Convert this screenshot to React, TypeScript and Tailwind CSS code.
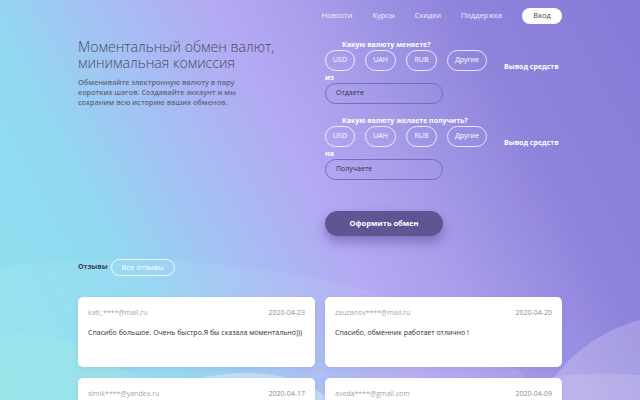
import React from "react";

const CurrencyBlock = ({ label, sub, placeholder }: { label: string; sub: string; placeholder: string }) => (
  <div className="flex flex-col">
    <div className="ml-[17px] text-[7px] font-bold text-white leading-[8px] whitespace-nowrap">{label}</div>
    <div className="flex items-start mt-[1px]">
      <div className="flex gap-[10px]">
        <div className="w-[30px] h-[21px] rounded-full border border-white/80 flex items-center justify-center text-[7px] text-white">USD</div>
        <div className="w-[31px] h-[21px] rounded-full border border-white/80 flex items-center justify-center text-[7px] text-white">UAH</div>
        <div className="w-[31px] h-[21px] rounded-full border border-white/80 flex items-center justify-center text-[7px] text-white">RUB</div>
        <div className="w-[40px] h-[21px] rounded-full border border-white/80 flex items-center justify-center text-[7px] text-white">Другие</div>
      </div>
      <div className="ml-[17px] mt-[13px] text-[7px] font-bold text-white leading-[8px] whitespace-nowrap">Вывод средств</div>
    </div>
    <div className="mt-[3px] text-[7px] font-bold text-white leading-[8px]">{sub}</div>
    <div className="mt-[1px] w-[118px] h-[21px] rounded-full border border-[#6a60b0]/80 flex items-center pl-[10px] text-[7px] text-[#33314f]">
      {placeholder}
    </div>
  </div>
);

const Card = ({ email, date, text }: { email: string; date: string; text: string }) => (
  <div className="h-[70px] bg-white rounded-[5px] px-[10px] pt-[11px] shadow-[0_2px_6px_rgba(80,80,140,0.12)]">
    <div className="flex justify-between text-[7px] leading-[9px]">
      <span className="text-[#a6a6a6]">{email}</span>
      <span className="text-[#8e8e8e]">{date}</span>
    </div>
    <div className="mt-[11px] text-[7px] leading-[9px] text-[#2e2e36]">{text}</div>
  </div>
);

export default function App() {
  return (
    <div className="relative w-[640px] h-[400px] overflow-hidden font-['Open_Sans',sans-serif] bg-[linear-gradient(62deg,#8ee2ee_0%,#90d9f1_22%,#a5c0f4_36%,#b4a9f3_50%,#a69ce9_62%,#8f84dc_78%,#857ad6_100%)]">
      <svg className="absolute inset-0 pointer-events-none" width="640" height="400" viewBox="0 0 640 400">
        <ellipse cx="120" cy="420" rx="420" ry="160" fill="white" opacity="0.07" />
        <path d="M0 335 C 40 325, 90 345, 140 380 C 160 395, 170 400, 180 400 L 0 400 Z" fill="#9fe6e6" opacity="0.5" />
        <path d="M140 400 C 200 370, 260 365, 310 385 L 330 400 Z" fill="white" opacity="0.35" />
        <path d="M540 400 C 560 360, 600 330, 640 320 L 640 400 Z" fill="white" opacity="0.2" />
        <path d="M480 400 C 520 380, 560 370, 640 375 L 640 400 Z" fill="white" opacity="0.15" />
      </svg>
      <div className="relative mx-[78px] w-[484px]">
        <div className="flex justify-end items-center pt-[8px] text-[7.5px] text-white/85">
          <span>Новости</span>
          <span className="ml-[20px]">Курсы</span>
          <span className="ml-[20px]">Скидки</span>
          <span className="ml-[20px]">Поддержка</span>
          <div className="ml-[20px] w-[40px] h-[16px] rounded-full bg-white flex items-center justify-center text-[7.5px] text-[#444]">Вход</div>
        </div>

        <div className="grid grid-cols-2 gap-[10px] mt-[15px]">
          <div>
            <h1 className="text-[14.1px] leading-[16px] font-light text-[#474a62] whitespace-nowrap">
              Моментальный обмен валют,
              <br />
              минимальная комиссия
            </h1>
            <p className="mt-[6px] w-[170px] text-[7.3px] leading-[10px] font-semibold text-[#62667d]">
              Обменивайте электронную валюту в пару коротких шагов. Создавайте аккаунт и мы сохраним всю историю ваших обменов.
            </p>
          </div>
          <div className="pt-[2px]">
            <CurrencyBlock label="Какую валюту меняете?" sub="из" placeholder="Отдаете" />
            <div className="mt-[13px]">
              <CurrencyBlock label="Какую валюту желаете получить?" sub="на" placeholder="Получаете" />
            </div>
            <div className="mt-[31px] w-[118px] h-[25px] rounded-full bg-[#5e5592] shadow-[0_6px_12px_rgba(60,40,120,0.4)] flex items-center justify-center text-[7.5px] font-bold text-white">
              Оформить обмен
            </div>
          </div>
        </div>

        <div className="flex items-center mt-[23px]">
          <span className="text-[7px] font-bold text-[#3d4158]">Отзывы</span>
          <div className="ml-[3px] w-[64px] h-[17px] rounded-full border border-white/80 flex items-center justify-center text-[7.5px] text-white">
            Все отзывы
          </div>
        </div>

        <div className="grid grid-cols-2 gap-x-[10px] gap-y-[11px] mt-[21px]">
          <Card email="kati_****@mail.ru" date="2020-04-23" text="Спасибо большое. Очень быстро.Я бы сказала моментально)))" />
          <Card email="zauzanov****@mail.ru" date="2020-04-20" text="Спасибо, обменник работает отлично !" />
          <Card email="simik****@yandex.ru" date="2020-04-17" text="" />
          <Card email="aveda****@gmail.com" date="2020-04-09" text="" />
        </div>
      </div>
    </div>
  );
}
